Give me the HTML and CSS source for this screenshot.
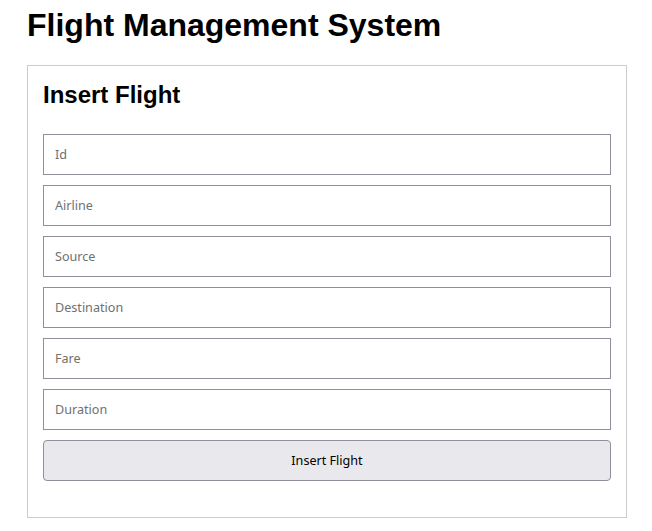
FILE: index.html
```html
<!DOCTYPE html>
<html>
<head>
<meta charset="utf-8">
<link rel="stylesheet" href="styles.css">
</head>
<body>
<div class="page">
  <h1 class="title">Flight Management System</h1>
  <div class="card">
    <h2 class="card-title">Insert Flight</h2>
    <form class="form">
      <input class="field" type="text" placeholder="Id">
      <input class="field" type="text" placeholder="Airline">
      <input class="field" type="text" placeholder="Source">
      <input class="field" type="text" placeholder="Destination">
      <input class="field" type="text" placeholder="Fare">
      <input class="field" type="text" placeholder="Duration">
      <button class="btn" type="button">Insert Flight</button>
    </form>
  </div>
</div>
</body>
</html>
```
FILE: styles.css
```css
* { box-sizing: border-box; }
html, body { margin: 0; padding: 0; background: #fff; }
body { font-family: "Liberation Sans", Arial, sans-serif; color: #000; }
.page { padding: 7px 25px 0 27px; }
.title {
  margin: 0;
  font-size: 32px;
  line-height: 37px;
  font-weight: bold;
}
.card {
  margin-top: 21px;
  width: 600px;
  border: 1px solid #cccccc;
  padding: 15px 15px 36px 15px;
}
.card-title {
  margin: 0 0 25px 0;
  font-size: 24px;
  line-height: 28px;
  font-weight: bold;
  padding-top: 0;
}
.form { display: flex; flex-direction: column; gap: 10px; }
.field {
  height: 41px;
  width: 100%;
  border: 1px solid #8f8f9d;
  border-radius: 0;
  padding: 0 11px;
  font-family: "Noto Sans", "Open Sans", sans-serif;
  font-size: 12.6px;
  color: #000;
  background: #fff;
  outline: none;
}
.field::placeholder { color: #707070; }
.btn {
  height: 41px;
  width: 100%;
  border: 1px solid #8f8f9d;
  border-radius: 4px;
  background: #e9e9ed;
  font-family: "Noto Sans", "Open Sans", sans-serif;
  font-size: 12.6px;
  color: #000;
  padding: 0;
}
```
